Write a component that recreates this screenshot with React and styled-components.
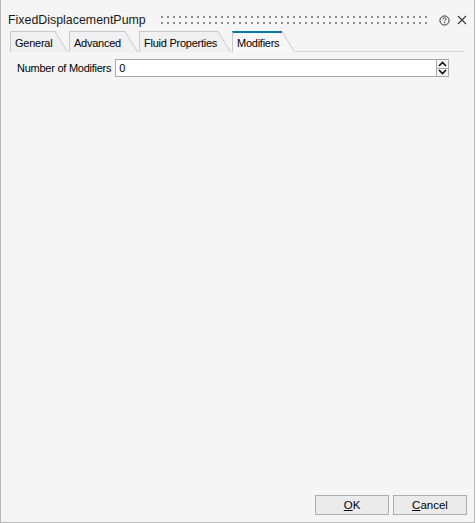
import React from "react";
import styled, { createGlobalStyle } from "styled-components";

const GlobalStyle = createGlobalStyle`
  html, body {
    margin: 0;
    padding: 0;
    background: #ffffff;
  }
  body {
    font-family: "Liberation Sans", Arial, sans-serif;
    font-size: 11px;
    color: #000;
  }
`;

const tabs = [
  { label: "General", width: 45 },
  { label: "Advanced", width: 56 },
  { label: "Fluid Properties", width: 79 },
  { label: "Modifiers", width: 50, active: true },
];

const App = () => {
  return (
    <>
      <GlobalStyle />
      <Window>
        <TitleBar>
          <Title>FixedDisplacementPump</Title>
          <Grip>
            <svg width="100%" height="8">
              <defs>
                <pattern id="dots" width="6" height="6" patternUnits="userSpaceOnUse">
                  <rect width="2" height="2" fill="#8e8e8e" />
                </pattern>
              </defs>
              <rect width="100%" height="8" fill="url(#dots)" />
            </svg>
          </Grip>
          <TitleIcon>
            <svg width="11" height="11" viewBox="0 0 11 11">
              <circle cx="5.5" cy="5.5" r="4.6" fill="none" stroke="#333" strokeWidth="1" />
              <path d="M3.9 4.3 C3.9 3.2 4.7 2.8 5.5 2.8 C6.4 2.8 7.1 3.3 7.1 4.1 C7.1 5.1 5.6 5.2 5.6 6.4" fill="none" stroke="#333" strokeWidth="1" />
              <rect x="5.1" y="7.3" width="1" height="1" fill="#333" />
            </svg>
          </TitleIcon>
          <TitleIcon>
            <svg width="10" height="10" viewBox="0 0 10 10">
              <path d="M1 1 L9 9 M9 1 L1 9" stroke="#333" strokeWidth="1.1" />
            </svg>
          </TitleIcon>
        </TitleBar>

        <TabStrip>
          {tabs.map((t) => (
            <Tab key={t.label}>
              <TabBody $width={t.width} $active={t.active}>
                {t.label}
              </TabBody>
              <TabSlant>
                <svg width="13" height="22" viewBox="0 0 13 22">
                  <polygon points="0,0 0.5,0 13,21 0,21" fill={t.active ? "#f7f7f7" : "#f0f0f0"} />
                  <line x1="0" y1="0.5" x2="12.6" y2="21" stroke="#c9c9c9" strokeWidth="1" />
                </svg>
              </TabSlant>
            </Tab>
          ))}
          <TabFiller />
        </TabStrip>

        <Content>
          <FieldRow>
            <FieldLabel>Number of Modifiers</FieldLabel>
            <Input>0</Input>
            <Spinner>
              <SpinButton>
                <svg width="9" height="6" viewBox="0 0 9 6">
                  <path d="M1 5 L4.5 1.5 L8 5" fill="none" stroke="#111" strokeWidth="1.6" />
                </svg>
              </SpinButton>
              <SpinButton>
                <svg width="9" height="6" viewBox="0 0 9 6">
                  <path d="M1 1 L4.5 4.5 L8 1" fill="none" stroke="#111" strokeWidth="1.6" />
                </svg>
              </SpinButton>
            </Spinner>
          </FieldRow>
        </Content>

        <Footer>
          <DialogButton>
            <u>O</u>K
          </DialogButton>
          <DialogButton>
            <u>C</u>ancel
          </DialogButton>
        </Footer>
      </Window>
    </>
  );
};

const Window = styled.div`
  box-sizing: border-box;
  width: 475px;
  height: 523px;
  background: #f5f5f5;
  border-left: 1px solid #b9b9b9;
  border-right: 1px solid #b9b9b9;
  border-bottom: 1px solid #b9b9b9;
  display: flex;
  flex-direction: column;
`;

const TitleBar = styled.div`
  display: flex;
  align-items: center;
  height: 20px;
  padding: 10px 3px 0 7px;
  color: #1a1a1a;
`;

const Title = styled.div`
  font-size: 12.4px;
  line-height: 16px;
  white-space: nowrap;
`;

const Grip = styled.div`
  flex: 1;
  display: flex;
  align-items: center;
  height: 8px;
  margin: 0 4px 0 15px;
  svg {
    display: block;
  }
`;

const TitleIcon = styled.div`
  width: 18px;
  display: flex;
  justify-content: center;
  align-items: center;
  svg {
    display: block;
  }
`;

const TabStrip = styled.div`
  display: flex;
  align-items: flex-end;
  margin: 0 10px 0 9px;
  height: 22px;
`;

const Tab = styled.div`
  display: flex;
  align-items: stretch;
  height: 21px;
  margin-right: 1px;
`;

const TabBody = styled.div`
  box-sizing: border-box;
  width: ${(p) => p.$width}px;
  padding: ${(p) => (p.$active ? "3px" : "4px")} 0 0 4px;
  white-space: nowrap;
  font-size: 11px;
  letter-spacing: -0.25px;
  line-height: 14px;
  color: #000;
  background: ${(p) => (p.$active ? "#f7f7f7" : "#f0f0f0")};
  border-left: 1px solid #c9c9c9;
  border-top: ${(p) => (p.$active ? "2px solid #0a78a6" : "1px solid #c9c9c9")};
`;

const TabSlant = styled.div`
  width: 13px;
  svg {
    display: block;
  }
`;

const TabFiller = styled.div`
  flex: 1;
  height: 0;
  border-bottom: 1px solid #d6d6d6;
  margin-left: -2px;
`;

const Content = styled.div`
  flex: 1;
  padding: 7px 26px 0 16px;
`;

const FieldRow = styled.div`
  display: flex;
  align-items: center;
  height: 18px;
`;

const FieldLabel = styled.div`
  font-size: 11px;
  letter-spacing: -0.25px;
  white-space: nowrap;
  margin-right: 4px;
`;

const Input = styled.div`
  box-sizing: border-box;
  flex: 1;
  height: 18px;
  background: #fff;
  border: 1px solid #a9a9a9;
  padding: 2px 0 0 3px;
  font-size: 11px;
  line-height: 13px;
`;

const Spinner = styled.div`
  box-sizing: border-box;
  width: 12px;
  height: 18px;
  display: flex;
  flex-direction: column;
  border: 1px solid #a9a9a9;
  border-left: none;
  margin-right: -1px;
`;

const SpinButton = styled.div`
  flex: 1;
  display: flex;
  align-items: center;
  justify-content: center;
  background: #f4f4f4;
  & + & {
    border-top: 1px solid #a9a9a9;
  }
  svg {
    display: block;
  }
`;

const Footer = styled.div`
  display: flex;
  justify-content: flex-end;
  gap: 4px;
  padding: 0 7px 7px 0;
`;

const DialogButton = styled.button`
  box-sizing: border-box;
  width: 74px;
  height: 20px;
  padding: 0;
  background: #ebebeb;
  border: 1px solid #adadad;
  border-radius: 0;
  font-family: "Liberation Sans", Arial, sans-serif;
  font-size: 11.5px;
  color: #000;
`;

export default App;
